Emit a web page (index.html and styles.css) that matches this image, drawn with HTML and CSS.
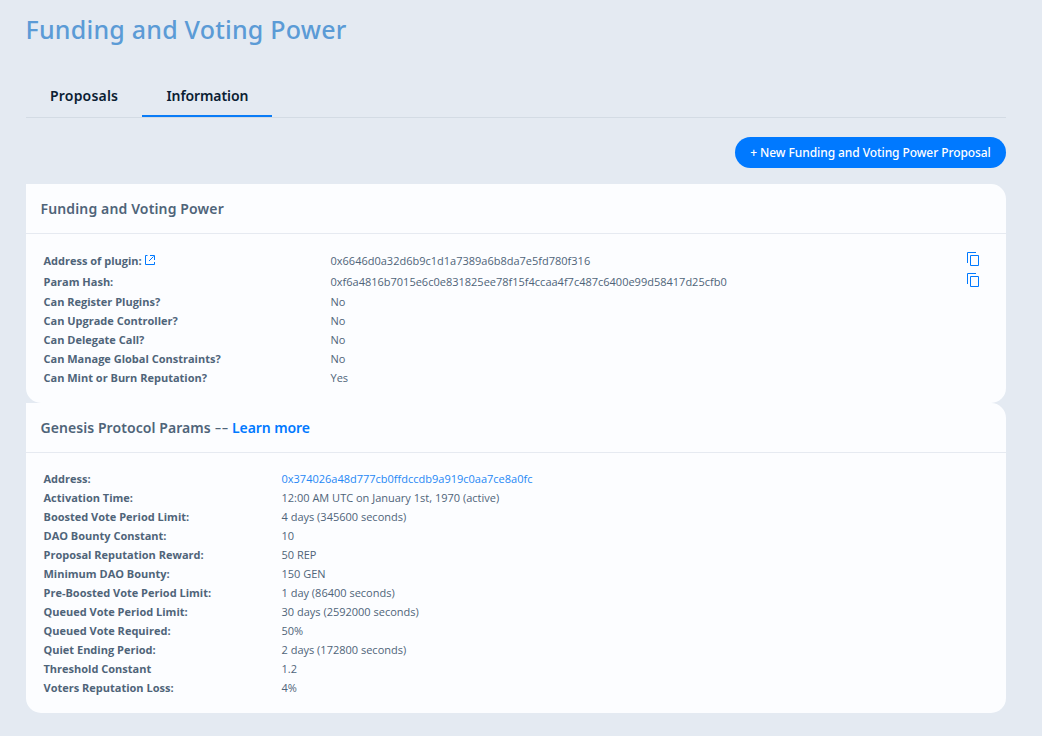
FILE: index.html
```html
<!DOCTYPE html>
<html lang="en">
<head>
<meta charset="utf-8">
<title>Funding and Voting Power</title>
<link rel="stylesheet" href="styles.css">
</head>
<body>
<main class="page">
  <h1 class="title"><span>Funding and Voting Power</span></h1>
  <nav class="tabs">
    <a class="tab tab-proposals"><span>Proposals</span></a>
    <a class="tab tab-information active"><span>Information</span></a>
  </nav>
  <div class="actions"><button class="new-proposal"><span>+ New Funding and Voting Power Proposal</span></button></div>

  <section class="card">
    <h2 class="card-head"><span class="head-plugin">Funding and Voting Power</span></h2>
    <div class="rows plugin">
      <div class="row tall"><b>Address of plugin: <svg class="external" width="10" height="10" viewBox="0 0 10 10"><path d="M2.500 .5h-2v9h9V7M5 .5h4.500V5M8.500 1.500L4 6"/></svg></b><span>0x6646d0a32d6b9c1d1a7389a6b8da7e5fd780f316</span><svg class="copy" width="13" height="15" viewBox="0 0 13 15"><path d="M9 .5H.5V11M3.500 3.500h8v10h-8z"/></svg></div>
      <div class="row tall"><b>Param Hash:</b><span>0xf6a4816b7015e6c0e831825ee78f15f4ccaa4f7c487c6400e99d58417d25cfb0</span><svg class="copy" width="13" height="15" viewBox="0 0 13 15"><path d="M9 .5H.5V11M3.500 3.500h8v10h-8z"/></svg></div>
      <div class="row"><b>Can Register Plugins?</b><span>No</span></div>
      <div class="row"><b>Can Upgrade Controller?</b><span>No</span></div>
      <div class="row"><b>Can Delegate Call?</b><span>No</span></div>
      <div class="row"><b>Can Manage Global Constraints?</b><span>No</span></div>
      <div class="row"><b>Can Mint or Burn Reputation?</b><span>Yes</span></div>
    </div>
  </section>

  <section class="card">
    <h2 class="card-head"><span class="head-genesis">Genesis Protocol Params</span><span class="dashes">––</span><a class="learn">Learn more</a></h2>
    <div class="rows genesis">
      <div class="row"><b>Address:</b><a class="address">0x374026a48d777cb0ffdccdb9a919c0aa7ce8a0fc</a></div>
      <div class="row"><b>Activation Time:</b><span>12:00 AM UTC on January 1st, 1970 (active)</span></div>
      <div class="row"><b>Boosted Vote Period Limit:</b><span>4 days (345600 seconds)</span></div>
      <div class="row"><b>DAO Bounty Constant:</b><span>10</span></div>
      <div class="row"><b>Proposal Reputation Reward:</b><span>50 REP</span></div>
      <div class="row"><b>Minimum DAO Bounty:</b><span>150 GEN</span></div>
      <div class="row"><b>Pre-Boosted Vote Period Limit:</b><span>1 day (86400 seconds)</span></div>
      <div class="row"><b>Queued Vote Period Limit:</b><span>30 days (2592000 seconds)</span></div>
      <div class="row"><b>Queued Vote Required:</b><span>50%</span></div>
      <div class="row"><b>Quiet Ending Period:</b><span>2 days (172800 seconds)</span></div>
      <div class="row"><b>Threshold Constant</b><span>1.2</span></div>
      <div class="row"><b>Voters Reputation Loss:</b><span>4%</span></div>
    </div>
  </section>
</main>
</body>
</html>
```
FILE: styles.css
```css
* { box-sizing: border-box; }
body {
  margin: 0;
  height: 736px;
  overflow: hidden;
  background: #e4eaf2;
  color: #4f6479;
  font-family: "Open Sans", "Noto Sans", sans-serif;
  font-size: 11px;
}
.page { padding: 10px 36px 0 26px; }
.title {
  margin: 0 0 0 -.5px;
  height: 40px;
  line-height: 38px;
  color: #5b9bd6;
  font-family: "Noto Sans", sans-serif;
  font-size: 25px;
  font-weight: 500;
  letter-spacing: .22px;
  white-space: nowrap;
}
.tabs {
  display: flex;
  height: 68px;
  padding-top: 25px;
  border-bottom: 1px solid #d3dbe4;
  font-family: "Noto Sans", sans-serif;
}
.tab {
  height: 42px;
  padding-left: 24px;
  line-height: 42px;
  color: #0a2033;
  font-size: 14px;
  font-weight: 600;
  white-space: nowrap;
}
.tab-proposals { width: 116px; letter-spacing: .2px; }
.tab-information { width: 130px; padding-left: 24.500px; letter-spacing: -.1px; }
.tab.active { border-bottom: 2px solid #0a7cf7; }
.actions { display: flex; justify-content: flex-end; padding: 19px 0 16px; }
.new-proposal {
  width: 271px;
  height: 31px;
  padding: 0;
  border: 0;
  border-radius: 16px;
  background: #0079ff;
  color: #fff;
  font: 500 12px/31px "Noto Sans", sans-serif;
  letter-spacing: -.08px;
  white-space: nowrap;
}
.card {
  border-radius: 0 15px 15px 15px;
  background: #fcfdff;
  padding-bottom: 16px;
}
.card-head {
  display: flex;
  height: 50px;
  margin: 0;
  padding-left: 14.500px;
  border-bottom: 1px solid #e6eaf1;
  font: 600 14px/50px "Noto Sans", sans-serif;
  white-space: nowrap;
}
.head-plugin { letter-spacing: .14px; }
.head-genesis { width: 171px; letter-spacing: .07px; }
.dashes { width: 17px; margin-left: 3.500px; font-size: 12px; letter-spacing: 1px; }
.learn { color: #0079ff; letter-spacing: -.08px; }
.rows { padding: 16px 26px 0 17.500px; }
.row { display: grid; height: 19px; line-height: 19px; white-space: nowrap; }
.row.tall { height: 21px; line-height: 21px; }
.plugin .row { grid-template-columns: 287px 1fr 13px; }
.genesis .row { grid-template-columns: 238px 1fr; }
.row b { font-weight: 700; }
.address { color: #2688f5; }
.external, .copy { fill: none; stroke: #0079ff; stroke-width: 1; }
.copy { margin-top: 2px; }
```
